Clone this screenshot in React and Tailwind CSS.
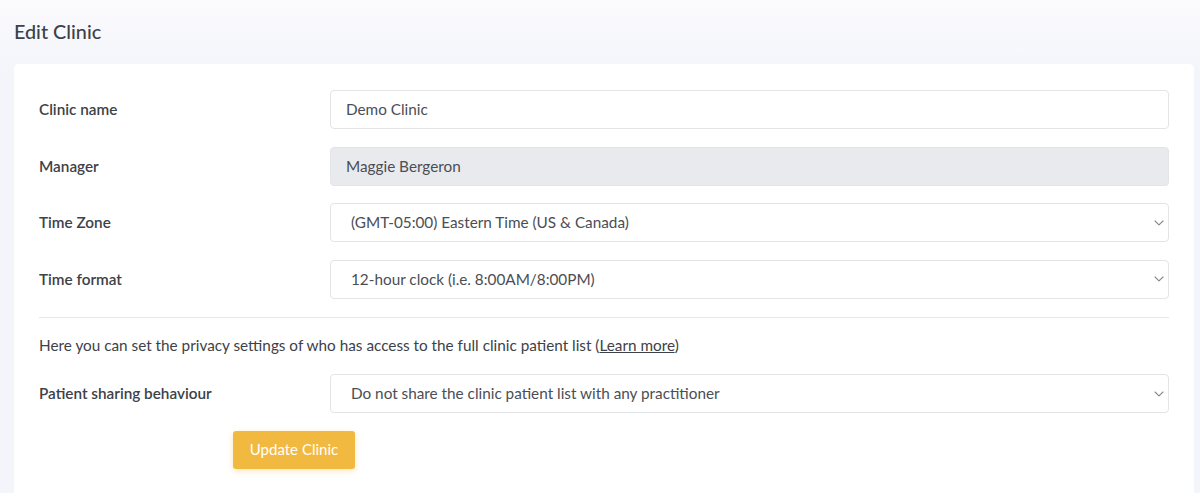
import React from "react";

const Chevron = () => (
  <svg className="absolute right-[4px] top-1/2 -translate-y-1/2" width="10" height="6" viewBox="0 0 10 6" fill="none">
    <path d="M1 1L5 4.8L9 1" stroke="#85898f" strokeWidth="1.1" strokeLinecap="round" strokeLinejoin="round" />
  </svg>
);

const Row = ({ label, children }) => (
  <div className="flex items-center h-[39px]">
    <div className="w-[291px] shrink-0 text-[15.3px] font-semibold text-[#3d4148]">{label}</div>
    <div className="flex-1">{children}</div>
  </div>
);

const Field = ({ value, disabled, select }) => (
  <div
    className={`relative h-[39px] rounded-[4px] border border-[#e3e4e8] flex items-center text-[15.3px] text-[#4a4e55] ${
      select ? "pl-[20px]" : "pl-[15px]"
    } ${disabled ? "bg-[#e9eaed]" : "bg-white"}`}
  >
    {value}
    {select && <Chevron />}
  </div>
);

export default function App() {
  return (
    <div
      className="w-[1200px] h-[493px] overflow-hidden bg-gradient-to-b from-[#fbfbfe] to-[#f4f5fa] to-[15%]"
      style={{ fontFamily: "Lato, 'Noto Sans', sans-serif" }}
    >
      <div className="pl-[14px] pt-[20px] h-[64px]">
        <h1 className="text-[19.8px] text-[#3d4148] font-medium leading-[22px]">Edit Clinic</h1>
      </div>
      <div className="ml-[14px] w-[1180px] bg-white rounded-[5px] px-[25px] pt-[26px] pb-[40px]">
        <div className="flex flex-col gap-[17.5px]">
          <Row label="Clinic name">
            <Field value="Demo Clinic" />
          </Row>
          <Row label="Manager">
            <Field value="Maggie Bergeron" disabled />
          </Row>
          <Row label="Time Zone">
            <Field value="(GMT-05:00) Eastern Time (US & Canada)" select />
          </Row>
          <Row label="Time format">
            <Field value="12-hour clock (i.e. 8:00AM/8:00PM)" select />
          </Row>
        </div>
        <div className="mt-[18px] border-t border-[#e6e7ea]" />
        <p className="mt-[17px] text-[15.3px] text-[#3d4148] leading-[20px]">
          Here you can set the privacy settings of who has access to the full clinic patient list (
          <span className="underline">Learn more</span>)
        </p>
        <div className="mt-[19.5px]">
          <Row label="Patient sharing behaviour">
            <Field value="Do not share the clinic patient list with any practitioner" select />
          </Row>
        </div>
        <div className="mt-[17.5px] ml-[194px]">
          <button className="h-[38px] w-[122px] rounded-[3px] bg-[#f2b940] text-white text-[15px] shadow-[0_2px_6px_rgba(242,185,64,0.35)]">
            Update Clinic
          </button>
        </div>
      </div>
    </div>
  );
}
